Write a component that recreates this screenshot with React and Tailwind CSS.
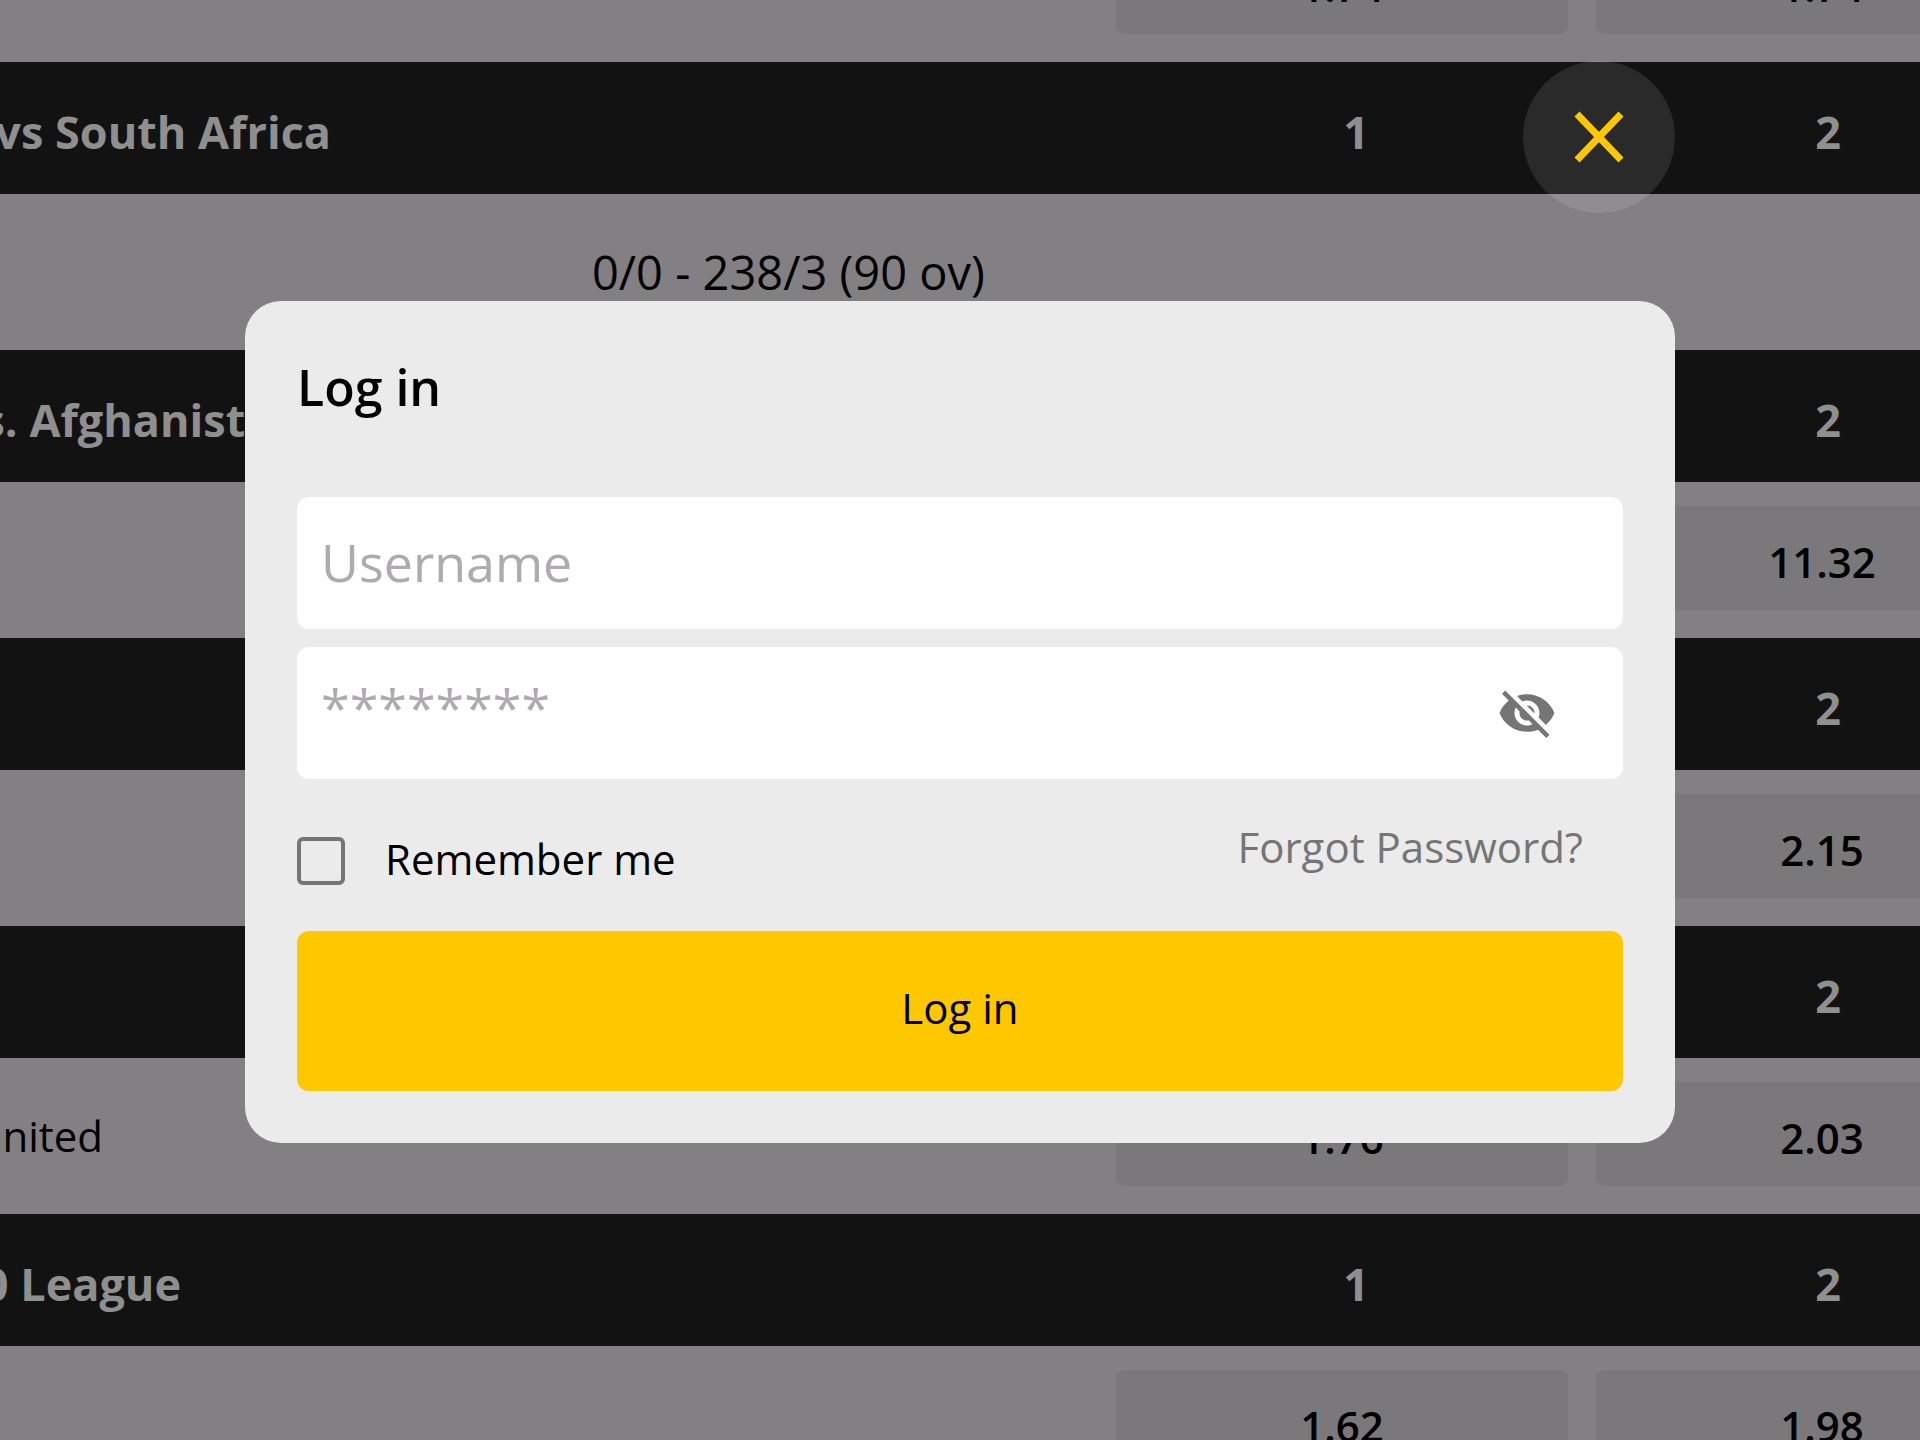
import React, { useState } from "react";
import { MdVisibility, MdVisibilityOff } from "react-icons/md";

const markets = [
  {
    title: "vs South Africa",
    titleWidth: "w-[331px]",
    columns: ["1", "2"],
    score: "0/0 - 238/3 (90 ov)",
    odds: [],
  },
  {
    title: "vs. Afghanistan",
    titleWidth: "w-[302px]",
    columns: ["", "2"],
    odds: ["", "11.32"],
  },
  { columns: ["", "2"], odds: ["", "2.15"] },
  { columns: ["", "2"], team: "United", odds: ["1.76", "2.03"] },
  {
    title: "T20 League",
    titleWidth: "w-[181px]",
    columns: ["1", "2"],
    odds: ["1.62", "1.98"],
  },
];

const OddsRow = ({ team, score, odds }) => (
  <div className="grid grid-cols-[minmax(0,1fr)_452px_452px] gap-7 h-[156px] pt-6 pb-7 -mr-32 bg-[#828082]">
    <div className="flex items-center pt-1 leading-none text-black">
      {team && (
        <div className="w-[103px] flex justify-end whitespace-nowrap text-[42px] font-medium">
          {team}
        </div>
      )}
      {score && <div className="pl-[592px] whitespace-nowrap text-[47px]">{score}</div>}
    </div>
    {odds.map((odd, index) =>
      odd ? (
        <button
          key={index}
          type="button"
          className="rounded-lg bg-[#7a787a] pt-2 text-black text-[42px] leading-none font-semibold"
        >
          {odd}
        </button>
      ) : (
        <div key={index} className="rounded-lg bg-[#7a787a]"></div>
      )
    )}
  </div>
);

const MarketHeader = ({ title, titleWidth, columns }) => (
  <div className="grid grid-cols-[minmax(0,1fr)_452px_452px] gap-5 items-center h-[132px] pt-2 -mr-[134px] bg-[#131213] text-[#8f8f8f] text-[45px] font-bold">
    <div className={`${titleWidth || "w-full"} flex justify-end whitespace-nowrap`}>
      {title}
    </div>
    {columns.map((column, index) => (
      <div key={index} className="text-center">
        {column}
      </div>
    ))}
  </div>
);

const LoginForm = () => {
  const [showPassword, setShowPassword] = useState(false);

  return (
    <form
      className="rounded-[36px] bg-[#ebebeb] p-13"
      onSubmit={(e) => e.preventDefault()}
    >
      <h2 className="text-[50px] leading-[68px] font-semibold text-black">Log in</h2>

      {/* Fields */}
      <div className="mt-19 flex flex-col gap-[18px]">
        <input
          type="text"
          aria-label="Username"
          placeholder="Username"
          className="w-full h-[132px] rounded-xl bg-white px-6 pb-1 text-[52px] text-black placeholder:text-[#adabad] outline-none"
        />
        <div className="flex items-center h-[132px] rounded-xl bg-white pl-6 pr-[66px]">
          <input
            type={showPassword ? "text" : "password"}
            aria-label="Password"
            placeholder="********"
            className="flex-1 min-w-0 pb-3 text-[52px] text-black placeholder:text-[#adabad] outline-none"
          />
          <button
            type="button"
            aria-label="Toggle password visibility"
            onClick={() => setShowPassword(!showPassword)}
            className="text-[#757575]"
          >
            {showPassword ? <MdVisibility size={60} /> : <MdVisibilityOff size={60} />}
          </button>
        </div>
      </div>

      {/* Remember me + forgot password */}
      <div className="my-8 h-[88px] flex items-start justify-between text-[42px]">
        <label className="flex items-center gap-10 pt-6 leading-12 text-black">
          <input
            type="checkbox"
            className="appearance-none size-12 rounded-md border-4 border-[#757575] checked:bg-[#fdc800]"
          />
          <span className="pb-1">Remember me</span>
        </label>
        <a href="#forgot" className="pt-3 pr-10 leading-12 text-[#757575]">
          Forgot Password?
        </a>
      </div>

      <button
        type="submit"
        className="w-full h-40 rounded-xl bg-[#fdc800] pb-2 text-[42px] text-black"
      >
        Log in
      </button>
    </form>
  );
};

const App = () => {
  return (
    <div className="relative min-h-screen overflow-hidden bg-[#828082] font-['Open_Sans',sans-serif]">
      {/* Odds list, scrolled a bit past the top */}
      <div className="absolute inset-0 overflow-hidden">
        <div className="-mt-[94px]">
          <OddsRow odds={["1.74", "1.74"]} />
          {markets.map((market, index) => (
            <section key={index}>
              <MarketHeader
                title={market.title}
                titleWidth={market.titleWidth}
                columns={market.columns}
              />
              <OddsRow team={market.team} score={market.score} odds={market.odds} />
            </section>
          ))}
        </div>
      </div>

      {/* Login dialog */}
      <div className="relative min-h-screen flex items-center justify-center px-[245px] pt-1">
        <div role="dialog" aria-label="Log in" className="relative w-full">
          <button
            type="button"
            aria-label="Close"
            className="absolute right-0 -top-60 size-38 rounded-full bg-white/10 flex items-center justify-center"
          >
            <svg viewBox="0 0 50 52" className="w-[50px] h-[52px]" fill="none">
              <path d="M3 3L47 49M47 3L3 49" stroke="#fdc800" strokeWidth="7" />
            </svg>
          </button>
          <LoginForm />
        </div>
      </div>
    </div>
  );
};

export default App;
